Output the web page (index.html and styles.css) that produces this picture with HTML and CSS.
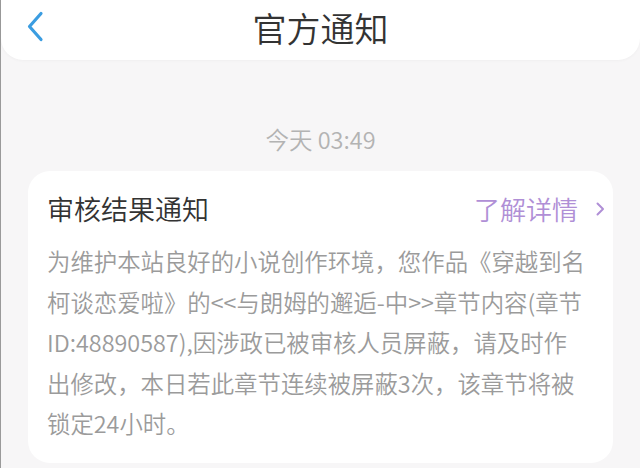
FILE: index.html
```html
<!DOCTYPE html>
<html lang="zh-CN">
<head>
<meta charset="utf-8">
<link rel="stylesheet" href="styles.css">
</head>
<body>
<div class="screen">
  <header class="topbar">
    <span class="back" aria-label="返回">
      <svg width="18" height="31" viewBox="0 0 18 31"><path d="M15 2.5 L3.5 15.5 L15 28.5" fill="none" stroke="#3b9de1" stroke-width="3.2" stroke-linecap="round" stroke-linejoin="round"/></svg>
    </span>
    <h1 class="title">官方通知</h1>
  </header>
  <div class="time">今天 03:49</div>
  <section class="card">
    <div class="card-head">
      <span class="card-title">审核结果通知</span>
      <span class="more">了解详情
        <svg width="10" height="14" viewBox="0 0 10 14"><path d="M2.5 1.5 L8 7 L2.5 12.5" fill="none" stroke="#b08fd6" stroke-width="2" stroke-linecap="round" stroke-linejoin="round"/></svg>
      </span>
    </div>
    <p class="body">为维护本站良好的小说创作环境，您作品《穿越到名<br>柯谈恋爱啦》的&lt;&lt;与朗姆的邂逅-中&gt;&gt;章节内容(章节<br>ID:48890587),因涉政已被审核人员屏蔽，请及时作<br>出修改，本日若此章节连续被屏蔽3次，该章节将被<br>锁定24小时。</p>
  </section>
</div>
</body>
</html>
```
FILE: styles.css
```css
html, body {
  margin: 0;
  padding: 0;
}
body {
  width: 640px;
  height: 468px;
  overflow: hidden;
  background: #f7f6f7;
  font-family: "Noto Sans CJK SC", "Noto Sans", sans-serif;
  font-weight: 350;
}
.screen {
  height: 468px;
  border-left: 1px solid #9a9a9a;
  box-sizing: border-box;
  display: flex;
  flex-direction: column;
}
.topbar {
  height: 60px;
  background: #fff;
  border-radius: 0 0 22px 22px;
  box-shadow: 0 1px 3px rgba(0,0,0,0.03);
  display: flex;
  align-items: center;
  justify-content: center;
  position: relative;
}
.back {
  position: absolute;
  left: 25px;
  top: 11px;
  display: flex;
}
.title {
  margin: 0;
  font-size: 34px;
  font-weight: 350;
  color: #333;
  line-height: 40px;
  margin-top: -5px;
}
.time {
  margin-top: 65px;
  text-align: center;
  font-size: 23.5px;
  line-height: 28px;
  color: #b3b3b3;
}
.card {
  margin: 18px 27px 0 27px;
  background: #fff;
  border-radius: 22px;
  padding: 20px 18px 19px 19px;
}
.card-head {
  display: flex;
  justify-content: space-between;
  align-items: center;
  height: 36px;
}
.card-title {
  font-size: 27px;
  color: #333;
  line-height: 36px;
}
.more {
  font-size: 26px;
  color: #b08fd6;
  line-height: 36px;
  display: flex;
  align-items: center;
  gap: 17px;
  margin-right: -10px;
}
.body {
  margin: 14px 0 0 0;
  font-size: 23.4px;
  line-height: 40.5px;
  color: #9b9b9b;
  white-space: nowrap;
}
```
